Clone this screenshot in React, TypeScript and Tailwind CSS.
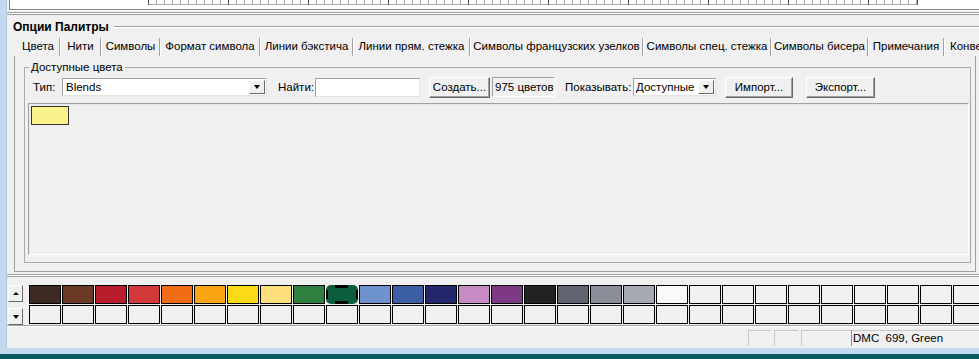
import React from "react";

const tabs: { label: string; w: string }[] = [
  { label: "Цвета", w: "w-[42px] justify-center" },
  { label: "Нити", w: "w-[39px] justify-center" },
  { label: "Символы", w: "w-[57px] justify-center" },
  { label: "Формат символа", w: "w-[98px] justify-center" },
  { label: "Линии бэкстича", w: "w-[91px] justify-center" },
  { label: "Линии прям. стежка", w: "w-[115px] justify-center" },
  { label: "Символы французских узелков", w: "w-[171px] justify-center" },
  { label: "Символы спец. стежка", w: "w-[126px] justify-center" },
  { label: "Символы бисера", w: "w-[95px] justify-center" },
  { label: "Примечания", w: "w-[74px] justify-center" },
  { label: "Конвертер", w: "w-[120px] justify-start pl-[5px]" },
];

const row1: string[] = [
  "#3d2a22",
  "#6b3a22",
  "#b81d2a",
  "#d3393b",
  "#f26b15",
  "#fba414",
  "#fbdb16",
  "#fde07b",
  "#2f7f3f",
  "SEL",
  "#6e92ce",
  "#3b5ea4",
  "#23266b",
  "#c78bc3",
  "#7e3985",
  "#222222",
  "#5f6470",
  "#8a8e98",
  "#a5a9b1",
  "#fafafc",
];
while (row1.length < 30) row1.push("#f0f0f0");
const row2: string[] = Array.from({ length: 30 }, () => "#f0f0f0");

function Ruler() {
  const minor: number[] = [];
  for (let x = 0; x <= 768; x += 8) minor.push(x);
  const major: number[] = [];
  for (let x = 0; x <= 768; x += 80) major.push(x);
  return (
    <svg width="770" height="9" className="ml-[138px] block">
      <line x1="0" y1="4.5" x2="769" y2="4.5" stroke="#a8a8a8" strokeWidth="1" />
      {minor.map((x) => (
        <line key={"m" + x} x1={x + 0.5} y1="0" x2={x + 0.5} y2="5" stroke="#a8a8a8" strokeWidth="1" />
      ))}
      {major.map((x) => (
        <line key={"M" + x} x1={x + 0.5} y1="0" x2={x + 0.5} y2="5" stroke="#505050" strokeWidth="1" />
      ))}
      <line x1="769.5" y1="0" x2="769.5" y2="5" stroke="#505050" strokeWidth="1" />
    </svg>
  );
}

function DownArrow() {
  return (
    <div className="w-0 h-0 border-l-[3.5px] border-r-[3.5px] border-t-[4px] border-l-transparent border-r-transparent border-t-black" />
  );
}

function UpArrow() {
  return (
    <div className="w-0 h-0 border-l-[3px] border-r-[3px] border-b-[3px] border-l-transparent border-r-transparent border-b-black" />
  );
}

function Swatch({ c }: { c: string }) {
  if (c === "SEL") {
    return (
      <div className="relative w-[32px] h-[19px] shrink-0">
        <div className="absolute inset-0 rounded-[5px] bg-[#0b5e3b]" />
        <div className="absolute left-[9px] top-0 w-[13px] h-[3px] bg-black" />
        <div className="absolute left-[9px] bottom-0 w-[13px] h-[3px] bg-black" />
        <div className="absolute left-0 top-[5px] w-[2px] h-[9px] bg-black" />
        <div className="absolute right-0 top-[5px] w-[2px] h-[9px] bg-black" />
      </div>
    );
  }
  return <div className="w-[32px] h-[19px] shrink-0 border border-black" style={{ backgroundColor: c }} />;
}

const btn =
  "h-[21px] flex items-center justify-center pt-[1px] bg-[#f0f0f0] border border-t-white border-l-white border-r-[#696969] border-b-[#696969] shadow-[inset_-1px_-1px_0_#a0a0a0] shrink-0 whitespace-nowrap";

export default function App() {
  return (
    <div className="w-[979px] h-[359px] overflow-hidden bg-[#f0f0f0] flex flex-col font-['Liberation_Sans',Arial,sans-serif] text-[11.5px] text-black leading-none select-none">
      <div className="h-[348px] flex shrink-0">
        {/* left window frame */}
        <div className="w-[7px] shrink-0 bg-[#c4d8ee] border-r border-r-[#b3c9e2]" />
        <div className="flex-1 flex flex-col min-w-0">
          {/* canvas strip */}
          <div className="h-[10px] ml-[2px] bg-white border-l border-l-[#828282] border-b border-b-[#828282] shrink-0">
            <Ruler />
          </div>
          <div className="h-[1px] bg-white shrink-0" />
          <div className="h-[1px] shrink-0" />
          <div className="h-[3px] border-t border-t-[#a0a0a0] border-b border-b-[#a0a0a0] bg-white shrink-0" />
          {/* header */}
          <div className="h-[23px] flex items-center pl-[6px] shrink-0">
            <span className="font-bold text-[12px] whitespace-nowrap">Опции Палитры</span>
            <div className="flex-1 ml-[5px] h-[2px] border-t border-t-[#a0a0a0] border-b border-b-white" />
          </div>
          {/* tabs */}
          <div className="h-[18px] flex ml-[10px] shrink-0 whitespace-nowrap overflow-hidden">
            {tabs.map((t, i) => (
              <React.Fragment key={t.label}>
                <div className={t.w + " shrink-0 h-[18px] flex pt-[2px]"}>
                  <span className="leading-[13px]">{t.label}</span>
                </div>
                {i < tabs.length - 1 && (
                  <div className="w-[2px] h-[18px] shrink-0 border-l border-l-[#a0a0a0] border-r border-r-white" />
                )}
              </React.Fragment>
            ))}
          </div>
          {/* tab panel */}
          <div className="ml-[7px] w-[962px] h-[216px] shrink-0 border-l border-r border-b border-[#a0a0a0] pt-[11px]">
            <div className="relative ml-[9px] w-[947px] h-[196px] border border-[#aaaaaa] pt-[9px]">
              <span className="absolute left-[4px] top-[-7px] px-[2px] bg-[#f0f0f0] leading-[13px]">
                Доступные цвета
              </span>
              {/* controls row */}
              <div className="h-[20px] flex items-center">
                <span className="ml-[8px] w-[29px] shrink-0 pt-[2px]">Тип:</span>
                <div className="w-[205px] h-[18px] shrink-0 bg-white border border-t-[#a0a0a0] border-l-[#a0a0a0] border-r-[#e3e3e3] border-b-[#e3e3e3] flex items-center justify-between">
                  <span className="pl-[3px] pt-[2px]">Blends</span>
                  <div className="w-[16px] h-[14px] mr-[1px] bg-[#f0f0f0] border border-t-white border-l-white border-r-[#696969] border-b-[#696969] flex items-center justify-center">
                    <DownArrow />
                  </div>
                </div>
                <span className="ml-[11px] w-[37px] shrink-0 pt-[2px]">Найти:</span>
                <div className="w-[105px] h-[19px] shrink-0 bg-white border border-t-[#a0a0a0] border-l-[#a0a0a0] border-r-[#e3e3e3] border-b-[#e3e3e3]" />
                <div className={btn + " ml-[9px] w-[61px]"}>Создать...</div>
                <div className="ml-[2px] w-[63px] h-[20px] shrink-0 flex items-center pl-[2px] pt-[2px] border border-t-[#a0a0a0] border-l-[#a0a0a0] border-r-white border-b-white whitespace-nowrap">
                  975 цветов
                </div>
                <span className="ml-[10px] w-[68px] shrink-0 whitespace-nowrap pt-[2px]">Показывать:</span>
                <div className="w-[83px] h-[18px] shrink-0 bg-white border border-t-[#a0a0a0] border-l-[#a0a0a0] border-r-[#e3e3e3] border-b-[#e3e3e3] flex items-center justify-between">
                  <span className="pl-[2px] pt-[2px]">Доступные</span>
                  <div className="w-[16px] h-[14px] mr-[1px] bg-[#f0f0f0] border border-t-white border-l-white border-r-[#696969] border-b-[#696969] flex items-center justify-center">
                    <DownArrow />
                  </div>
                </div>
                <div className={btn + " ml-[9px] w-[68px]"}>Импорт...</div>
                <div className={btn + " ml-[13px] w-[69px]"}>Экспорт...</div>
              </div>
              {/* list */}
              <div className="mt-[6px] ml-[3px] w-[941px] h-[152px] border border-t-[#a0a0a0] border-l-[#a0a0a0] border-r-white border-b-white shadow-[inset_1px_1px_0_#e8e8e8] pt-[2px] pl-[2px]">
                <div className="w-[38px] h-[19px] bg-[#f9f28b] border border-[#333]" />
              </div>
            </div>
          </div>
          {/* separator */}
          <div className="h-[2px] shrink-0" />
          <div className="h-[3px] shrink-0 border-t border-t-[#a0a0a0] border-b border-b-[#a0a0a0] bg-white" />
          {/* palette */}
          <div className="h-[48px] shrink-0 pt-[8px] flex">
            <div className="ml-[1px] w-[15px] flex flex-col shrink-0">
              <div className="h-[17px] bg-[#f0f0f0] border border-t-white border-l-white border-r-[#696969] border-b-[#696969] flex items-center justify-center">
                <UpArrow />
              </div>
              <div className="h-[6px]" />
              <div className="h-[17px] bg-[#f0f0f0] border border-t-white border-l-white border-r-[#696969] border-b-[#696969] flex items-center justify-center">
                <DownArrow />
              </div>
            </div>
            <div className="ml-[6px] flex flex-col gap-[1px]">
              <div className="flex gap-[1px]">
                {row1.map((c, i) => (
                  <Swatch key={i} c={c} />
                ))}
              </div>
              <div className="flex gap-[1px]">
                {row2.map((c, i) => (
                  <Swatch key={i} c={c} />
                ))}
              </div>
            </div>
          </div>
          <div className="h-[2px] shrink-0 border-t border-t-[#a0a0a0] border-b border-b-white" />
          {/* status bar */}
          <div className="flex-1 flex pt-[3px]">
            <div className="ml-[741px] w-[23px] h-[16px] border-l border-t border-[#c8c8c8]" />
            <div className="ml-[3px] w-[24px] h-[16px] border-l border-t border-[#c8c8c8]" />
            <div className="ml-[3px] w-[50px] h-[16px] border-l border-t border-[#c8c8c8]" />
            <div className="flex-1 h-[16px] border-l border-l-[#909090] border-t border-t-[#c8c8c8] flex items-center pl-[1px] pt-[1px] whitespace-pre text-[11.5px]">
              DMC  699, Green
            </div>
          </div>
        </div>
      </div>
      <div className="h-[6px] shrink-0 bg-[#c4d8ee]" />
      <div className="h-[5px] shrink-0 bg-[#0d5b61]" />
    </div>
  );
}
